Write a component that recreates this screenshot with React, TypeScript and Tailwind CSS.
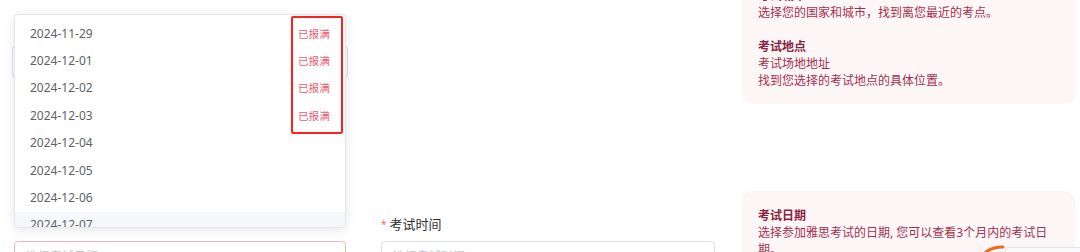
import clsx from 'clsx';

const dates = [
  { d: '2024-11-29', full: true },
  { d: '2024-12-01', full: true },
  { d: '2024-12-02', full: true },
  { d: '2024-12-03', full: true },
  { d: '2024-12-04', full: false },
  { d: '2024-12-05', full: false },
  { d: '2024-12-06', full: false },
  { d: '2024-12-07', full: false, hover: true },
];

const font = "font-['Noto_Sans','Noto_Sans_CJK_SC',sans-serif]";

function Label(props: { text: string, hidden?: boolean }) {
  return (
    <div className={clsx(
      'flex h-[17px] items-center text-[13px] leading-[17px] text-[#303133]',
      props.hidden && 'invisible',
    )}>
      <span className='mr-[3px] text-[10px] text-[#f56c6c]'>*</span>
      {props.text}
    </div>
  );
}

function DateDropdown() {
  return (
    <div className={clsx(
      'absolute left-[14px] top-[14px] z-10 h-[214px] w-[332px] overflow-hidden',
      'rounded-[4px] border border-[#e4e7ed] bg-white',
      'shadow-[0_2px_12px_0_rgba(0,0,0,0.1)]',
    )}>
      <ul className='pt-[5px]'>
        {dates.map((item) => (
          <li
            key={item.d}
            className={clsx(
              'flex h-[27.4px] items-center justify-between pl-[15px] pr-[15px]',
              item.hover && 'bg-[#f5f7fa]',
            )}
          >
            <span className='text-[12px] text-[#606266]'>{item.d}</span>
            {item.full && <span className='text-[10.7px] text-[#ef5a6f]'>已报满</span>}
          </li>
        ))}
      </ul>
      {/* annotation box */}
      <div className='absolute left-[276px] top-[1px] h-[118px] w-[52px] rounded-[2px] border-2 border-[#ff1f1f]' />
    </div>
  );
}

function InfoPanel(props: { children: React.ReactNode, className?: string }) {
  return (
    <div className={clsx(
      'rounded-[10px] bg-[#fcf6f7] px-4 text-[12px] leading-[17px] text-[#a6304f]',
      props.className,
    )}>
      {props.children}
    </div>
  );
}

export default function App() {
  return (
    <div className={clsx('relative h-[252px] w-[1080px] overflow-hidden bg-white', font)}>
      <div className='flex pl-[14px]'>
        {/* col 1 */}
        <div className='flex w-[332px] flex-col'>
          <div className='ml-[-2px] mt-[46px] h-[32px] w-[336px] rounded-[4px] border border-[#dcdfe6]' />
          <div className='mt-[138px]'>
            <Label text='考试日期' hidden />
          </div>
          <div className='mt-[8px] h-[32px] rounded-[4px] border border-[#f7b3b8] px-[11px] text-[12px] leading-[30px] text-[#c0c4cc]'>
            选择考试日期
          </div>
        </div>

        {/* col 2 */}
        <div className='ml-[35px] flex w-[334px] flex-col pt-[216px]'>
          <Label text='考试时间' />
          <div className='mt-[8px] h-[32px] rounded-[4px] border border-[#dcdfe6] px-[11px] text-[12px] leading-[30px] text-[#c0c4cc]'>
            选择考试时间
          </div>
        </div>

        {/* col 3 */}
        <div className='ml-[27px] flex w-[333px] flex-col'>
          <InfoPanel className='mt-[-29px] pb-[15px] pt-[16px]'>
            <p className='font-bold text-[#8c1f3d]'>考试城市</p>
            <p>选择您的国家和城市，找到离您最近的考点。</p>
            <p className='h-[17px]' />
            <p className='font-bold text-[#8c1f3d]'>考试地点</p>
            <p>考试场地地址</p>
            <p>找到您选择的考试地点的具体位置。</p>
          </InfoPanel>
          <InfoPanel className='mt-[87px] pb-[15px] pt-[16px]'>
            <p className='font-bold text-[#8c1f3d]'>考试日期</p>
            <p>选择参加雅思考试的日期, 您可以查看3个月内的考试日期。</p>
          </InfoPanel>
        </div>
      </div>

      <DateDropdown />

      {/* bottom-right annotation */}
      <svg className='absolute left-[984px] top-[244px]' width='22' height='10' viewBox='0 0 22 10'>
        <path d='M2 8 Q8 3 19 3' stroke='#f26a1f' strokeWidth='3' fill='none' strokeLinecap='round' />
      </svg>
      <div className='absolute left-[1005px] top-[247px] h-[20px] w-[80px] rounded-tl-[3px] border border-[#e3e8ef] bg-[#f8fafc]' />
    </div>
  );
}
